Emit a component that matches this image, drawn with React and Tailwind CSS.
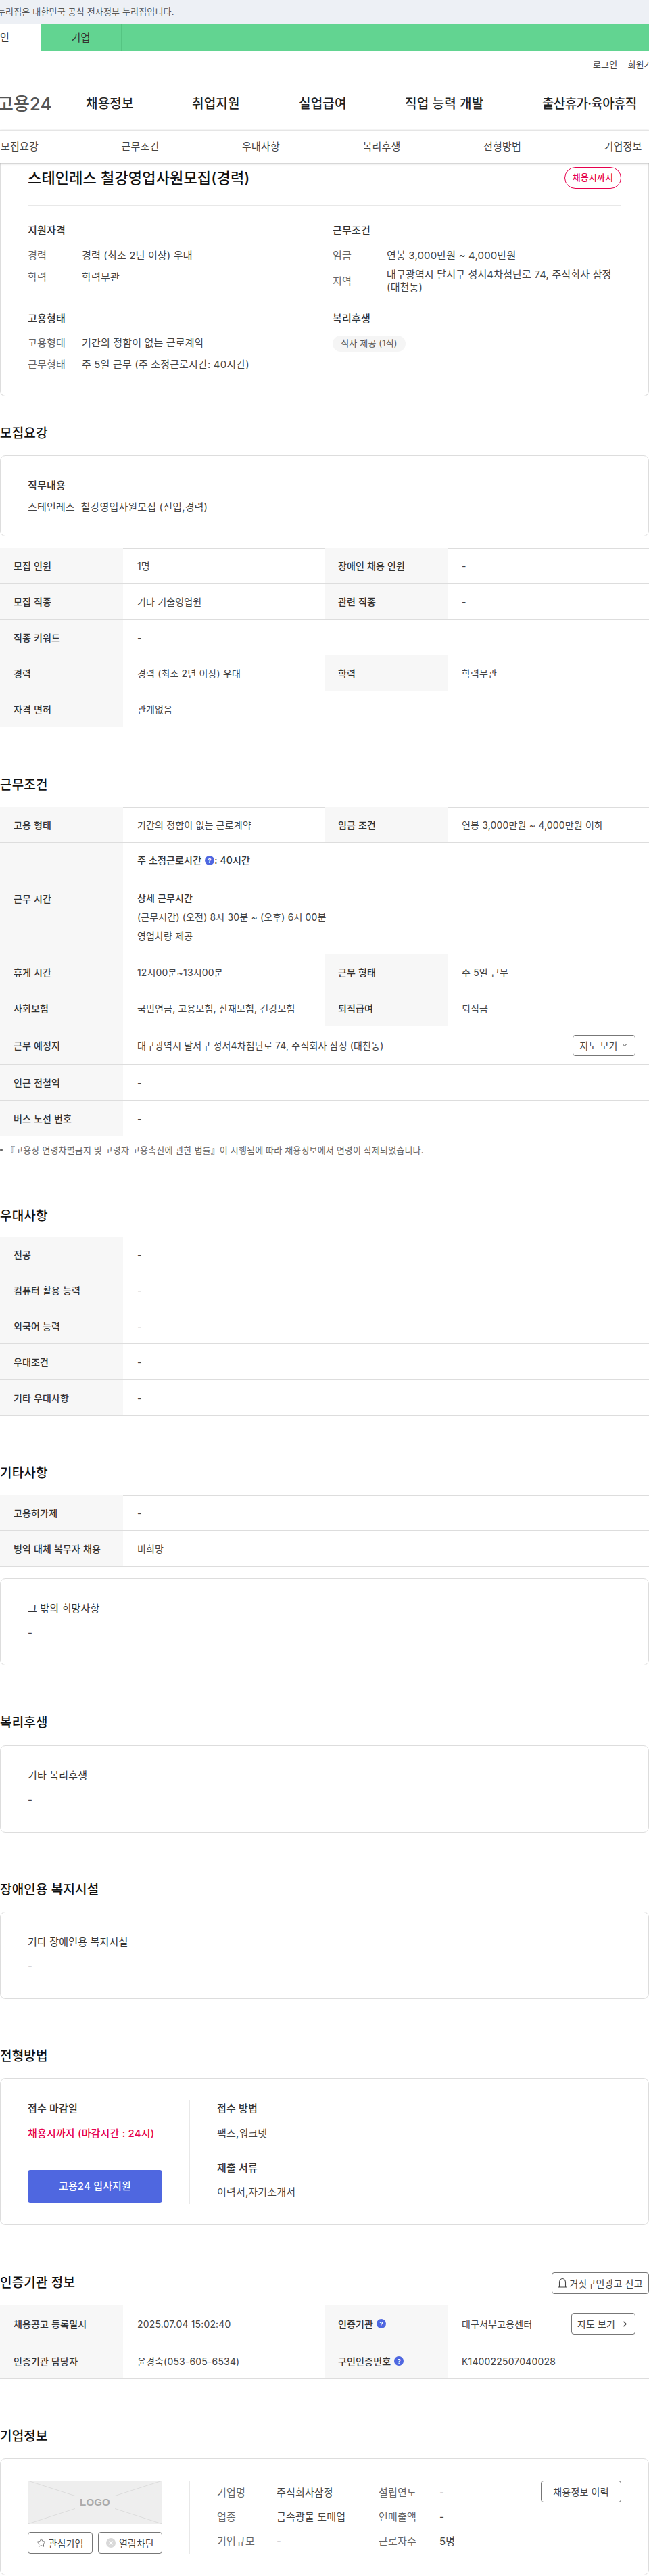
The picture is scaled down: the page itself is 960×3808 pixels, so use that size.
import React from "react";
import { ChevronDown, ChevronRight, Star } from "lucide-react";

const FONT = "font-['Inter','Noto_Sans_CJK_KR','Noto_Sans',sans-serif]";

function Help() {
  return (
    <span className="inline-flex h-[14px] w-[14px] shrink-0 items-center justify-center rounded-full bg-[#4f67e0] text-[9px] font-bold leading-none text-white">?</span>
  );
}

function Heading({ children, top }) {
  return <h2 className={`${top} text-[19px] font-medium leading-[28px] text-[#111]`}>{children}</h2>;
}

function Cell({ label, children, last, help }) {
  return (
    <>
      <div className="flex items-center gap-[5px] bg-[#f7f7f7] pl-5 text-[14px] font-medium text-[#333]">
        {label}
        {help && <Help />}
      </div>
      <div className={`flex items-center pl-[21px] text-[14px] text-[#444] ${last ? "pr-5" : ""}`}>{children}</div>
    </>
  );
}

function Row({ h = "h-[53px]", cols = 4, children }) {
  return (
    <div className={`grid border-b border-[#ddd] ${h} ${cols === 4 ? "grid-cols-[182px_298px_182px_1fr]" : "grid-cols-[182px_1fr]"}`}>
      {children}
    </div>
  );
}

function Table({ top, children }) {
  return (
    <div className={`${top} border-t border-[#ddd]`}>
      <div className="-mt-px">{children}</div>
    </div>
  );
}

function Card({ top, h, children, extra = "" }) {
  return <div className={`${top} ${h} rounded-lg border border-[#ddd] bg-white px-10 ${extra}`}>{children}</div>;
}

function NoteCard({ top, h, title, value, bold, gap = "mt-3" }) {
  return (
    <Card top={top} h={h} extra="pt-[32px]">
      <div className={`text-[15px] leading-6 text-[#333] ${bold ? "font-medium" : ""}`}>{title}</div>
      <div className={`${gap} whitespace-pre text-[15px] leading-6 text-[#444]`}>{value}</div>
    </Card>
  );
}

function Info({ label, children, two }) {
  return (
    <div className={`flex items-center ${two ? "min-h-[38px] leading-[19px]" : "min-h-[32px]"}`}>
      <span className="w-[80px] shrink-0 text-[15px] text-[#666]">{label}</span>
      <span className="text-[15px] text-[#444]">{children}</span>
    </div>
  );
}

function OutlineBtn({ children, cls }) {
  return (
    <button className={`flex items-center justify-center rounded border border-[#777] bg-white text-[14px] text-[#444] ${cls}`}>{children}</button>
  );
}

function CompanyRow({ a, b, c, d }) {
  return (
    <div className="flex h-[36px] items-center text-[15px]">
      <span className="w-[88px] text-[#666]">{a}</span>
      <span className="w-[151px] text-[#444]">{b}</span>
      <span className="w-[90px] text-[#666]">{c}</span>
      <span className="text-[#444]">{d}</span>
    </div>
  );
}

export default function App() {
  return (
    <div className={`${FONT} w-[960px] overflow-hidden bg-white tracking-[0.01em]`}>
      <div className="flex h-[36px] items-center overflow-hidden whitespace-nowrap bg-[#edf0f5] text-[13px] text-[#555]">
        <span className="-ml-[4px]">누리집은 대한민국 공식 전자정부 누리집입니다.</span>
      </div>
      <div className="flex h-[40px] bg-[#62d491] text-[15px] text-[#333]">
        <div className="flex w-[60px] items-center overflow-hidden bg-white"><span className="-ml-[14px]">개인</span></div>
        <div className="flex w-[120px] items-center justify-center border-r border-[#55c482]">기업</div>
      </div>
      <div className="flex h-[40px] items-center gap-[15px] overflow-hidden whitespace-nowrap pl-[877px] text-[13px] text-[#444]">
        <span>로그인</span>
        <span>회원가입</span>
      </div>
      <div className="relative flex h-[76px] items-center overflow-hidden whitespace-nowrap text-[19px] font-medium text-[#222]">
        <span className="absolute -left-[4px] text-[26px] font-medium leading-none tracking-normal text-[#555]">고용24</span>
        <span className="ml-[127px] w-[157px]">채용정보</span>
        <span className="w-[158px]">취업지원</span>
        <span className="w-[157px]">실업급여</span>
        <span className="w-[203px]">직업 능력 개발</span>
        <span className="tracking-[-0.035em]">출산휴가·육아휴직</span>
      </div>
      <div className="relative z-10 grid h-[49px] grid-cols-[178.5px_178.5px_178.5px_178.5px_178.5px_1fr] items-center border-t border-[#e5e5e5] bg-white pl-[1px] text-[15px] text-[#444] shadow-[0_1px_3px_rgba(0,0,0,0.25)]">
        <span>모집요강</span>
        <span>근무조건</span>
        <span>우대사항</span>
        <span>복리후생</span>
        <span>전형방법</span>
        <span>기업정보</span>
      </div>

      <div className="h-[345px] rounded-b-lg border border-t-0 border-[#ddd] px-10 pt-[6px]">
        <div className="flex h-[32px] items-center justify-between">
          <h1 className="text-[22px] font-medium text-[#111]">스테인레스 철강영업사원모집(경력)</h1>
          <span className="flex h-[32px] w-[84px] items-center justify-center rounded-full border border-[#e6004d] text-[13px] font-medium text-[#e6004d]">채용시까지</span>
        </div>
        <div className="mt-[24px] border-b border-[#e8e8e8]" />
        <div className="mt-[25px] grid grid-cols-[451px_1fr]">
          <div className="h-[130px]">
            <div className="mb-[9px] text-[15px] font-medium leading-6 text-[#333]">지원자격</div>
            <Info label="경력">경력 (최소 2년 이상) 우대</Info>
            <Info label="학력">학력무관</Info>
          </div>
          <div className="h-[130px]">
            <div className="mb-[9px] text-[15px] font-medium leading-6 text-[#333]">근무조건</div>
            <Info label="임금">연봉 3,000만원 ~ 4,000만원</Info>
            <div className="mt-[2px]">
              <Info label="지역" two>대구광역시 달서구 성서4차첨단로 74, 주식회사 삼정<br />(대천동)</Info>
            </div>
          </div>
          <div>
            <div className="mb-[8px] text-[15px] font-medium leading-6 text-[#333]">고용형태</div>
            <Info label="고용형태">기간의 정함이 없는 근로계약</Info>
            <Info label="근무형태">주 5일 근무 (주 소정근로시간: 40시간)</Info>
          </div>
          <div>
            <div className="mb-[11px] text-[15px] font-medium leading-6 text-[#333]">복리후생</div>
            <span className="inline-flex h-[24px] w-[108px] items-center justify-center rounded-full bg-[#f5f5f5] text-[13px] text-[#555]">식사 제공 (1식)</span>
          </div>
        </div>
      </div>

      <Heading top="mt-[41px]">모집요강</Heading>
      <NoteCard top="mt-[18px]" h="h-[120px]" title="직무내용" value="스테인레스  철강영업사원모집 (신입,경력)" bold gap="mt-[8px]" />
      <Table top="mt-[17px]">
        <Row><Cell label="모집 인원">1명</Cell><Cell label="장애인 채용 인원">-</Cell></Row>
        <Row><Cell label="모집 직종">기타 기술영업원</Cell><Cell label="관련 직종">-</Cell></Row>
        <Row cols={2}><Cell label="직종 키워드">-</Cell></Row>
        <Row><Cell label="경력">경력 (최소 2년 이상) 우대</Cell><Cell label="학력">학력무관</Cell></Row>
        <Row cols={2}><Cell label="자격 면허">관계없음</Cell></Row>
      </Table>

      <Heading top="mt-[72px]">근무조건</Heading>
      <Table top="mt-[18px]">
        <Row><Cell label="고용 형태">기간의 정함이 없는 근로계약</Cell><Cell label="임금 조건">연봉 3,000만원 ~ 4,000만원 이하</Cell></Row>
        <Row cols={2} h="h-[165px]">
          <Cell label="근무 시간">
            <div className="leading-[28px]">
              <div className="flex items-center font-medium text-[#333]">
                <span className="mr-[5px]">주 소정근로시간</span>
                <Help />
                <span>: 40시간</span>
              </div>
              <div className="h-[28px]" />
              <div className="font-medium text-[#333]">상세 근무시간</div>
              <div>(근무시간) (오전) 8시 30분 ~ (오후) 6시 00분</div>
              <div>영업차량 제공</div>
            </div>
          </Cell>
        </Row>
        <Row><Cell label="휴게 시간">12시00분~13시00분</Cell><Cell label="근무 형태">주 5일 근무</Cell></Row>
        <Row><Cell label="사회보험">국민연금, 고용보험, 산재보험, 건강보험</Cell><Cell label="퇴직급여">퇴직금</Cell></Row>
        <Row cols={2} h="h-[57px]">
          <Cell label="근무 예정지" last>
            <div className="flex w-full items-center justify-between">
              <span>대구광역시 달서구 성서4차첨단로 74, 주식회사 삼정 (대천동)</span>
              <OutlineBtn cls="h-[31px] w-[93px] gap-1"><span>지도 보기</span><ChevronDown size={12} /></OutlineBtn>
            </div>
          </Cell>
        </Row>
        <Row cols={2}><Cell label="인근 전철역">-</Cell></Row>
        <Row cols={2}><Cell label="버스 노선 번호">-</Cell></Row>
      </Table>
      <p className="mt-[10px] flex items-center gap-[5px] text-[13px] leading-5 text-[#666]">
        <span className="h-[4px] w-[4px] rounded-full bg-[#666]" />
        『고용상 연령차별금지 및 고령자 고용촉진에 관한 법률』이 시행됨에 따라 채용정보에서 연령이 삭제되었습니다.
      </p>

      <Heading top="mt-[74px]">우대사항</Heading>
      <Table top="mt-[16px]">
        <Row cols={2}><Cell label="전공">-</Cell></Row>
        <Row cols={2}><Cell label="컴퓨터 활용 능력">-</Cell></Row>
        <Row cols={2}><Cell label="외국어 능력">-</Cell></Row>
        <Row cols={2}><Cell label="우대조건">-</Cell></Row>
        <Row cols={2}><Cell label="기타 우대사항">-</Cell></Row>
      </Table>

      <Heading top="mt-[71px]">기타사항</Heading>
      <Table top="mt-[18px]">
        <Row cols={2}><Cell label="고용허가제">-</Cell></Row>
        <Row cols={2}><Cell label="병역 대체 복무자 채용">비희망</Cell></Row>
      </Table>
      <NoteCard top="mt-[17px]" h="h-[129px]" title="그 밖의 희망사항" value="-" />

      <Heading top="mt-[71px]">복리후생</Heading>
      <NoteCard top="mt-[19px]" h="h-[129px]" title="기타 복리후생" value="-" />

      <Heading top="mt-[71px]">장애인용 복지시설</Heading>
      <NoteCard top="mt-[18px]" h="h-[129px]" title="기타 장애인용 복지시설" value="-" />

      <Heading top="mt-[71px]">전형방법</Heading>
      <Card top="mt-[18px]" h="h-[217px]" extra="pt-[32px]">
        <div className="flex h-[153px]">
          <div className="w-[199px] shrink-0">
            <div className="text-[15px] font-medium leading-6 text-[#333]">접수 마감일</div>
            <div className="mt-[13px] text-[15px] font-medium leading-6 text-[#e6004d]">채용시까지 (마감시간 : 24시)</div>
            <button className="mt-[42px] flex h-[48px] w-[199px] items-center justify-center rounded bg-[#4f67e0] text-[15px] font-medium text-white">고용24 입사지원</button>
          </div>
          <div className="ml-[40px] w-px bg-[#e8e8e8]" />
          <div className="ml-[40px]">
            <div className="text-[15px] font-medium leading-6 text-[#333]">접수 방법</div>
            <div className="mt-[13px] text-[15px] leading-6 text-[#444]">팩스,워크넷</div>
            <div className="mt-[27px] text-[15px] font-medium leading-6 text-[#333]">제출 서류</div>
            <div className="mt-[12px] text-[15px] leading-6 text-[#444]">이력서,자기소개서</div>
          </div>
        </div>
      </Card>

      <div className="mt-[70px] flex h-[32px] items-center justify-between">
        <h2 className="text-[19px] font-medium leading-[28px] text-[#111]">인증기관 정보</h2>
        <OutlineBtn cls="h-[32px] w-[144px] gap-[3px]">
          <svg width="14" height="16" viewBox="0 0 14 16" fill="none" stroke="#444" strokeWidth="1.1"><path d="M1 14h12M2.5 14V7a4.5 5.5 0 0 1 9 0v7" /></svg>
          거짓구인광고 신고
        </OutlineBtn>
      </div>
      <Table top="mt-[16px]">
        <Row h="h-[57px]">
          <Cell label="채용공고 등록일시">2025.07.04 15:02:40</Cell>
          <Cell label="인증기관" help last>
            <div className="flex w-full items-center justify-between">
              <span>대구서부고용센터</span>
              <OutlineBtn cls="h-[32px] w-[95px] gap-[8px]"><span>지도 보기</span><ChevronRight size={13} strokeWidth={2.5} /></OutlineBtn>
            </div>
          </Cell>
        </Row>
        <Row>
          <Cell label="인증기관 담당자">윤경숙(053-605-6534)</Cell>
          <Cell label="구인인증번호" help>K140022507040028</Cell>
        </Row>
      </Table>

      <Heading top="mt-[71px]">기업정보</Heading>
      <Card top="mt-[18px]" h="h-[173px]" extra="pt-[32px]">
        <div className="flex h-[108px]">
          <div className="w-[199px] shrink-0">
            <div className="relative flex h-[64px] items-center justify-center overflow-hidden bg-[#eeeeee]">
              <svg className="absolute inset-0 h-full w-full" viewBox="0 0 199 64" preserveAspectRatio="none" stroke="#dcdcdc" strokeWidth="1"><path d="M0 0L199 64M199 0L0 64" /></svg>
              <span className="relative bg-[#eeeeee] px-[7px] font-['Liberation_Sans',sans-serif] text-[15px] font-bold text-[#aaa]">LOGO</span>
            </div>
            <div className="mt-[12px] flex justify-between">
              <OutlineBtn cls="h-[32px] w-[96px] gap-[3px]"><Star size={14} strokeWidth={1.3} />관심기업</OutlineBtn>
              <OutlineBtn cls="h-[32px] w-[95px] gap-[5px]">
                <svg width="14" height="14" viewBox="0 0 14 14"><circle cx="7" cy="7" r="7" fill="#d9d9d9" /><path d="M4.5 4.5l5 5M9.5 4.5l-5 5" stroke="#fff" strokeWidth="1.4" /></svg>
                열람차단
              </OutlineBtn>
            </div>
          </div>
          <div className="ml-[40px] w-px bg-[#e8e8e8]" />
          <div className="ml-[40px] flex-1">
            <CompanyRow a="기업명" b="주식회사삼정" c="설립연도" d="-" />
            <CompanyRow a="업종" b="금속광물 도매업" c="연매출액" d="-" />
            <CompanyRow a="기업규모" b="-" c="근로자수" d="5명" />
          </div>
          <OutlineBtn cls="h-[32px] w-[119px] shrink-0">채용정보 이력</OutlineBtn>
        </div>
      </Card>
    </div>
  );
}
